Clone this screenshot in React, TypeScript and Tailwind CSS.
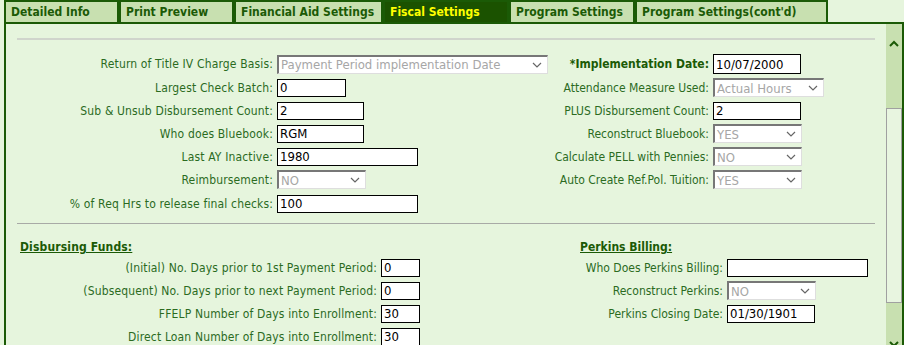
import React from 'react';

const FONT = { fontFamily: '"DejaVu Sans Condensed", "DejaVu Sans", sans-serif' };

const tabs = [
  { label: 'Detailed Info', w: 'w-[115px]' },
  { label: 'Print Preview', w: 'w-[115px]' },
  { label: 'Financial Aid Settings', w: 'w-[149px]' },
  { label: 'Fiscal Settings', w: 'w-[126px]', active: true },
  { label: 'Program Settings', w: 'w-[126px]' },
  { label: "Program Settings(cont'd)", w: 'w-[193px]' },
];

const Chevron = ({ className }: { className?: string }) => (
  <svg width="10" height="6" viewBox="0 0 10 6" className={className}>
    <path d="M1 1l4 4 4-4" fill="none" stroke="currentColor" strokeWidth="1.2" />
  </svg>
);

const TextBox = ({ value, w, tall }: { value: string; w: string; tall?: boolean }) => (
  <div
    className={`${w} ${tall ? 'h-[20px]' : 'h-[18px]'} bg-white border border-black flex items-center pl-[2px] text-[13px] text-black leading-none`}
  >
    {value}
  </div>
);

const Dropdown = ({ value, w }: { value: string; w: string }) => (
  <div
    className={`${w} h-[19px] bg-white border-t-2 border-l-2 border-r border-b border-t-[#777] border-l-[#777] border-r-[#dedede] border-b-[#dedede] flex items-center justify-between pl-[2px] pr-[5px] text-[13px] text-[#a6a6a6] leading-none`}
  >
    <span>{value}</span>
    <Chevron className="text-[#666]" />
  </div>
);

const Label = ({
  children,
  w,
  bold,
  tight,
}: {
  children: React.ReactNode;
  w: string;
  bold?: boolean;
  tight?: boolean;
}) => (
  <div className={`${w} flex-none flex justify-end pr-[4px]`}>
    <span
      className={`text-[12px] ${tight ? '' : 'tracking-[0.15px]'} ${
        bold ? 'font-bold text-[#1b5a06]' : 'text-[#2b6b1f]'
      } whitespace-nowrap`}
    >
      {children}
    </span>
  </div>
);

export default function App() {
  return (
    <div className="w-[904px] h-[345px] overflow-hidden bg-[#e6f5dd]" style={FONT}>
      {/* tabs */}
      <div className="flex pl-[4px] h-[22px] bg-[#e6f5dd]">
        {tabs.map((t) => (
          <div
            key={t.label}
            className={`${t.w} h-[22px] border-2 border-b-0 border-[#1b5a06] flex items-center pl-[5px] text-[12px] font-bold ${
              t.active ? 'bg-[#1b5200] text-[#ffff00]' : 'bg-[#c8e0b0] text-[#1b5a06]'
            }`}
          >
            {t.label}
          </div>
        ))}
      </div>

      {/* panel */}
      <div className="ml-[4px] w-[900px] h-[330px] border-2 border-[#1b5a06] flex">
        <div className="flex-1">
          <div className="mt-[14px] mx-[11px] h-[2px] bg-[#d0d5cc]" />

          <div className="mt-[12px]">
            {[
              [
                ['Return of Title IV Charge Basis:', <Dropdown value="Payment Period implementation Date" w="w-[271px]" />],
                ['*Implementation Date:', <TextBox value="10/07/2000" w="w-[88px]" tall />, true],
              ],
              [
                ['Largest Check Batch:', <TextBox value="0" w="w-[69px]" />],
                ['Attendance Measure Used:', <Dropdown value="Actual Hours" w="w-[111px]" />],
              ],
              [
                ['Sub & Unsub Disbursement Count:', <TextBox value="2" w="w-[87px]" />],
                ['PLUS Disbursement Count:', <TextBox value="2" w="w-[88px]" />],
              ],
              [
                ['Who does Bluebook:', <TextBox value="RGM" w="w-[87px]" />],
                ['Reconstruct Bluebook:', <Dropdown value="YES" w="w-[89px]" />],
              ],
              [
                ['Last AY Inactive:', <TextBox value="1980" w="w-[141px]" />],
                ['Calculate PELL with Pennies:', <Dropdown value="NO" w="w-[89px]" />],
              ],
              [
                ['Reimbursement:', <Dropdown value="NO" w="w-[89px]" />],
                ['Auto Create Ref.Pol. Tuition:', <Dropdown value="YES" w="w-[89px]" />],
              ],
              [['% of Req Hrs to release final checks:', <TextBox value="100" w="w-[141px]" />]],
            ].map((row, i) => (
              <div key={i} className={`flex items-center ${i === 0 ? 'h-[24px]' : 'h-[23px]'} ${i === 6 ? 'mt-[1px]' : ''}`}>
                <Label w="w-[271px]">{row[0][0] as string}</Label>
                <div className="w-[279px] flex-none">{row[0][1] as React.ReactNode}</div>
                {row[1] && (
                  <>
                    <Label w="w-[157px]" bold={!!row[1][2]} tight>
                      {row[1][0] as string}
                    </Label>
                    {row[1][1] as React.ReactNode}
                  </>
                )}
              </div>
            ))}
          </div>

          <div className="mt-[8px] mx-[11px] h-px bg-[#a8aaa6]" />

          <div className="flex mt-[16px]">
            <div className="w-[574px]">
              <div className="pl-[14px] text-[12px] tracking-[0.15px] font-bold underline text-[#1b5a06] h-[15px] leading-[15px]">
                Disbursing Funds:
              </div>
              <div className="mt-[1px]">
                {[
                  ['(Initial) No. Days prior to 1st Payment Period:', '0'],
                  ['(Subsequent) No. Days prior to next Payment Period:', '0'],
                  ['FFELP Number of Days into Enrollment:', '30'],
                  ['Direct Loan Number of Days into Enrollment:', '30'],
                ].map(([l, v]) => (
                  <div key={l} className="flex items-center h-[23px]">
                    <Label w="w-[375px]">{l}</Label>
                    <TextBox value={v} w="w-[39px]" />
                  </div>
                ))}
              </div>
            </div>
            <div>
              <div className="text-[12px] font-bold underline text-[#1b5a06] h-[15px] leading-[15px]">
                Perkins Billing:
              </div>
              <div className="mt-[1px]">
                <div className="flex items-center h-[23px]">
                  <Label w="w-[147px]" tight>Who Does Perkins Billing:</Label>
                  <TextBox value="" w="w-[141px]" />
                </div>
                <div className="flex items-center h-[23px]">
                  <Label w="w-[147px]" tight>Reconstruct Perkins:</Label>
                  <Dropdown value="NO" w="w-[89px]" />
                </div>
                <div className="flex items-center h-[23px]">
                  <Label w="w-[147px]" tight>Perkins Closing Date:</Label>
                  <TextBox value="01/30/1901" w="w-[88px]" />
                </div>
              </div>
            </div>
          </div>
        </div>

        {/* scrollbar */}
        <div className="w-[16px] bg-[#c8e0b0] flex flex-col">
          <div className="h-[84px] flex justify-center pt-[16px]">
            <svg width="10" height="7" viewBox="0 0 10 7">
              <path d="M1 6l4-4 4 4" fill="none" stroke="#1b5a06" strokeWidth="2" />
            </svg>
          </div>
          <div className="h-[195px] bg-[#e8f5e0] border border-[#a0a0a0]" />
          <div className="flex-1 flex justify-center items-end pb-[2px]">
            <svg width="10" height="7" viewBox="0 0 10 7">
              <path d="M1 1l4 4 4-4" fill="none" stroke="#1b5a06" strokeWidth="2" />
            </svg>
          </div>
        </div>
      </div>
    </div>
  );
}
